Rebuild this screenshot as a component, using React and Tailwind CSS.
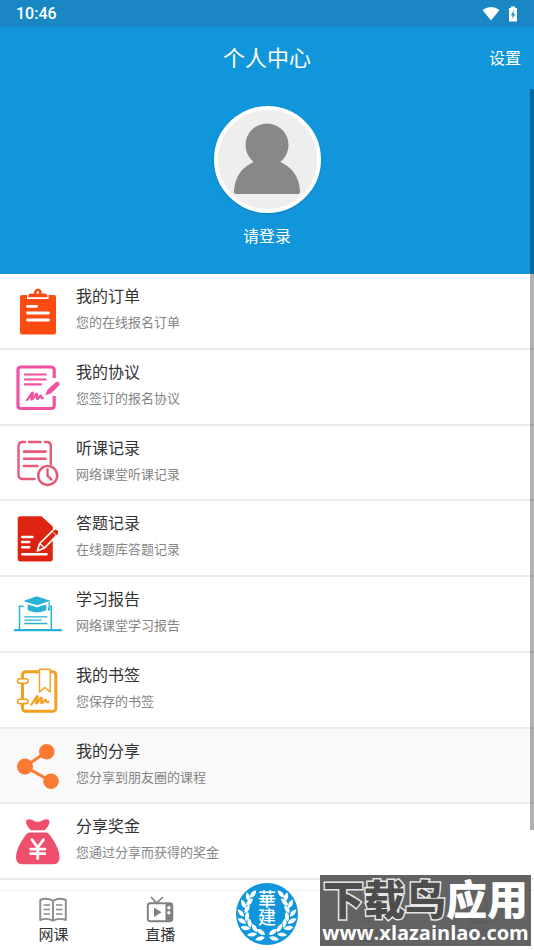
import React from 'react'

const OrderIcon = () => (
  <svg viewBox="0 0 48 48" className="w-12 h-12" fill="none">
    <rect x="6" y="7" width="36" height="39.5" rx="2" fill="#fd4a10" />
    <path d="M13 11V7.500Q13 4.500 16.500 4.500H19.500A4.300 4.300 0 0 1 28 4.500H31Q34.600 4.500 34.600 7.500V11Z" fill="#fff" />
    <path d="M14.300 9.300V8Q14.300 5.500 17 5.500H30.500Q33.300 5.500 33.300 8V9.300Z" fill="#fd4a10" />
    <circle cx="23.800" cy="4.600" r="2.600" fill="#fff" stroke="#fd4a10" strokeWidth="2.400" />
    <path d="M13.500 18.400H22.500M13.500 25H34.500M13.500 32H34.500" stroke="#fff" strokeWidth="2.800" strokeLinecap="round" />
  </svg>
)

const AgreementIcon = () => (
  <svg viewBox="0 0 48 48" className="w-12 h-12" fill="none" stroke="#f0529f" strokeLinecap="round" strokeLinejoin="round">
    <path d="M40.200 14V6Q40.200 3 37.200 3H7Q4 3 4 6V41.500Q4 44.500 7 44.500H37.200Q40.200 44.500 40.200 41.500V32" strokeWidth="3.200" strokeLinecap="butt" />
    <path d="M10 10.500H32.500M10 15.500H32.500M10 20.300H27.700" strokeWidth="2.200" strokeLinecap="butt" />
    <path d="M13 36C15.500 33.500 17 29.500 18.500 28.500C20 28.500 16 36 18 35.500C20 34.500 21 30 22.800 29.700C24 30 21.500 35 23.500 35C25 35 25.300 31.500 26.700 31.500C27.500 32 26.500 34.500 29 34" strokeWidth="2.200" />
    <path d="M32 30.500L34 26L42.500 18.500Q44.500 18 45 20.500L36.500 29Z" fill="#f0529f" strokeWidth="1.200" />
  </svg>
)

const LessonRecordIcon = () => (
  <svg viewBox="0 0 48 48" className="w-12 h-12" fill="none" stroke="#e55a75" strokeLinecap="round" strokeLinejoin="round">
    <path d="M11 2H8.500Q4.500 2 4.500 6V34.500Q4.500 39 8.500 39H20.500M15 2H26.500M31 2H33Q36.800 2 36.800 6V24" strokeWidth="2.400" />
    <path d="M10 11.600H31.500M10 18.700H31.500M10 26H23.500" strokeWidth="2.600" />
    <circle cx="33.700" cy="35.500" r="9.500" fill="#fff" strokeWidth="2.500" />
    <path d="M33.500 29.500V35.800L37.500 39.500" strokeWidth="2.500" />
  </svg>
)

const AnswerRecordIcon = () => (
  <svg viewBox="0 0 48 48" className="w-12 h-12" fill="none">
    <path d="M6.500 1.200H27.500L38.800 11.500V43.500Q38.800 46.500 36 46.500H6.500Q3.700 46.500 3.700 43.500V4Q3.700 1.200 6.500 1.200Z" fill="#dc2410" />
    <path d="M8.200 22H18.500M8.200 27.100H15.200M8.200 32.300H15.200M8.200 39.200H32.500" stroke="#fff" strokeWidth="2.500" strokeLinecap="round" />
    <path d="M23.300 36L25.700 28.500L38.500 15.800L43 20.200L30.500 33Z" fill="#dc2410" stroke="#fff" strokeWidth="1.700" strokeLinejoin="round" />
    <path d="M25.700 28.500L30.500 33" stroke="#fff" strokeWidth="1.400" />
    <path d="M38.700 16.500Q41 13.700 43.500 15.500Q45.300 17.500 42.700 20.200" fill="#dc2410" />
  </svg>
)

const ReportIcon = () => (
  <svg viewBox="0 0 48 48" className="w-12 h-12" fill="none" stroke="#26b3d6">
    <path d="M0.800 39.200H47.200" strokeWidth="2.200" strokeLinecap="round" />
    <path d="M9.500 15.200H5.500V38.500M35.500 15.200H37.300V38.500" strokeWidth="1.500" />
    <path d="M10.300 25.800H33.300M10.300 29.200H27.700M10.300 32.500H33.300" strokeWidth="1.300" />
    <path d="M9.300 10L22.700 5.300L36.300 9.800L23 14.300Z" fill="#26b3d6" stroke="none" />
    <path d="M13.700 13.500L23 16.200L32.300 13.500V19.300Q23 23.500 13.700 19.300Z" fill="#26b3d6" stroke="none" />
    <path d="M35 10V16.500" strokeWidth="1.100" />
    <path d="M34.200 16.300H35.800L36.200 19.500H33.800Z" fill="#26b3d6" stroke="none" />
  </svg>
)

const BookmarkIcon = () => (
  <svg viewBox="0 0 48 48" className="w-12 h-12" fill="none" stroke="#f59f1f" strokeLinejoin="round" strokeLinecap="round">
    <rect x="8.500" y="4.800" width="33.300" height="39.500" rx="3" strokeWidth="3" />
    <rect x="3.600" y="11.800" width="10.500" height="4.400" rx="2.200" fill="#fff" strokeWidth="1.600" />
    <rect x="3.600" y="32.200" width="10.500" height="4.400" rx="2.200" fill="#fff" strokeWidth="1.600" />
    <path d="M25.500 2.200H36.200V25L30.800 20.500L25.500 25Z" fill="#fff" strokeWidth="1.400" />
    <path d="M17.300 37.500C20 35 21.300 30 23.300 29C25 29.300 20.500 37 22.500 36.500C24.700 35.500 25.500 30.800 27.300 30.500C29 30.800 26 36.300 28 36.200C29.800 35.800 30 32.800 31.500 32.800C32.500 33.200 31.500 36 34.500 35" strokeWidth="2.200" />
  </svg>
)

const ShareIcon = () => (
  <svg viewBox="0 0 48 48" className="w-12 h-12" fill="#fb7a33">
    <path d="M32.700 8.700L11 23.600L37 38.200" stroke="#fb7a33" strokeWidth="3" fill="none" />
    <circle cx="32.700" cy="8.700" r="7.700" />
    <circle cx="11" cy="23.600" r="8" />
    <circle cx="37" cy="38.200" r="7.800" />
  </svg>
)

const BonusIcon = () => (
  <svg viewBox="0 0 48 48" className="w-12 h-12" fill="#ee4f6c">
    <path d="M17 12.300Q12 7.500 12 4Q12 1 15.500 1.200Q18 1.300 20 3Q23.700 4.700 27.500 3Q29.500 1.300 32 1.200Q35.500 1 35.500 4Q35.500 7.500 30.500 12.300Z" />
    <path d="M15.500 14.500H32Q34.500 14.500 36.500 18Q45.500 30 45.500 39.500Q45.500 46.300 39 46.300H8.500Q2 46.300 2 39.500Q2 30 11 18Q13 14.500 15.500 14.500Z" />
    <path d="M18 21.700L23.700 29.500L29.500 21.700M23.700 29.500V40.700M16.700 31.200H30.800M16.700 35.700H30.800" fill="none" stroke="#fff" strokeWidth="2.800" strokeLinecap="round" />
  </svg>
)

const CourseIcon = () => (
  <svg viewBox="0 0 28 28" className="w-7 h-7" fill="none" stroke="#8c8c8c">
    <path d="M14 4.800Q8 1.300 1.200 4V24Q8 21.500 14 24.700Q20 21.500 26.800 24V4Q20 1.300 14 4.800V24.500" strokeWidth="1.900" strokeLinejoin="round" />
    <path d="M4.500 9H11M4.500 13.500H11M4.500 18H11M17 9H23.500M17 13.500H23.500M17 18H23.500" strokeWidth="1.500" />
  </svg>
)

const LiveIcon = () => (
  <svg viewBox="0 0 28 28" className="w-7 h-7" fill="none" stroke="#808080">
    <path d="M5 1L10.500 7L17 1" strokeWidth="1.700" />
    <rect x="1.800" y="7.300" width="24.500" height="18" rx="2.500" strokeWidth="1.900" />
    <path d="M19.500 7.300H26V25.300H19.500Z" fill="#808080" stroke="none" />
    <path d="M8 11.500V21L15.500 16.200Z" fill="#808080" stroke="none" />
    <circle cx="22.900" cy="11.800" r="1.700" fill="#fff" stroke="none" />
    <circle cx="22.900" cy="16.800" r="1.700" fill="#fff" stroke="none" />
  </svg>
)

const QuizIcon = () => (
  <svg viewBox="0 0 28 28" className="w-7 h-7" fill="none" stroke="#808080" strokeWidth="1.700">
    <rect x="4" y="3" width="20" height="22" rx="2" />
    <path d="M8 9H20M8 14H20M8 19H15" />
  </svg>
)

const MineIcon = () => (
  <svg viewBox="0 0 28 28" className="w-7 h-7" fill="none" stroke="#1296db" strokeWidth="1.700">
    <circle cx="14" cy="9" r="6" />
    <path d="M3 26Q3 16 14 16Q25 16 25 26Z" />
  </svg>
)

// position and direction of each leaf along the left branch
const leaves = [
  [17, 11, -40], [12, 14, 15], [13.500, 19, -45], [7.500, 21, 25], [11, 26, -30], [5, 30, 40],
  [11, 33.500, -10], [6, 38, 60], [13.500, 40, 10], [9.500, 45, 80], [18.500, 45, 30], [16, 51.500, 95],
  [25, 49, 55], [24, 55.500, 105],
]

const Branch = () => (
  <g>
    {leaves.map(([x, y, angle], index) => (
      <path
        key={index}
        d="M0 -5Q4.200 0 0 5Q-4.200 0 0 -5Z"
        transform={`translate(${x} ${y}) rotate(${-angle})`}
      />
    ))}
  </g>
)

const records = [
  { title: '我的订单', description: '您的在线报名订单', icon: OrderIcon },
  { title: '我的协议', description: '您签订的报名协议', icon: AgreementIcon },
  { title: '听课记录', description: '网络课堂听课记录', icon: LessonRecordIcon },
  { title: '答题记录', description: '在线题库答题记录', icon: AnswerRecordIcon },
  { title: '学习报告', description: '网络课堂学习报告', icon: ReportIcon },
  { title: '我的书签', description: '您保存的书签', icon: BookmarkIcon },
  { title: '我的分享', description: '您分享到朋友圈的课程', icon: ShareIcon, active: true },
  { title: '分享奖金', description: '您通过分享而获得的奖金', icon: BonusIcon },
]

const NavItem = ({ icon: Icon, label, current }) => (
  <a href="#" className={`flex flex-col items-center pt-[5px] ${current ? 'text-[#1296db]' : 'text-[#333]'}`}>
    <Icon />
    <span className="text-[15px] leading-[22px]">{label}</span>
  </a>
)

const App = () => {
  return (
    <div className="relative min-h-screen flex flex-col bg-white font-['Roboto','Noto_Sans_CJK_SC',sans-serif]">
      {/* Status bar */}
      <div className="h-[27px] px-4 flex items-center justify-between bg-[#1987c3] text-white">
        <span className="text-base leading-6 font-medium">10:46</span>
        <div className="flex items-center gap-2">
          <svg viewBox="0 0 18 15" className="w-[18px] h-[15px]" fill="#fff">
            <path d="M0.500 4Q9 -2 17.500 4L9 14.500Z" />
          </svg>
          <svg viewBox="0 0 10 16" className="w-[10px] h-4" fill="#fff">
            <path d="M3 0.500H7V2H9V15.500H1V2H3Z" />
            <path d="M6 4.500L2.800 9.200H4.700L4.200 13L7.300 8.200H5.500Z" fill="#1987c3" />
          </svg>
        </div>
      </div>

      {/* Header */}
      <header className="h-[62px] pt-[2px] px-[13px] grid grid-cols-3 items-center bg-[#1296db] text-white">
        <h1 className="col-start-2 text-center text-[22px] leading-8">个人中心</h1>
        <button type="button" className="justify-self-end text-base leading-6">设置</button>
      </header>

      {/* Profile */}
      <section className="flex flex-col items-center pt-[17px] pb-[25px] bg-[#1296db] text-white">
        <div className="w-[107px] h-[107px] rounded-full border-4 border-white bg-[#eee] overflow-hidden shadow">
          <svg viewBox="1 1 99 99" className="w-full h-full" fill="#888">
            <circle cx="50" cy="36" r="21.500" />
            <path d="M17 83Q17.500 61 38.500 52H61.500Q82.500 61 83 83Q83 85 81 85H19Q17 85 17 83Z" />
          </svg>
        </div>
        <button type="button" className="mt-3 text-base leading-6">请登录</button>
      </section>

      {/* Records */}
      <ul className="flex-1 grid auto-rows-fr pb-[10px]">
        {records.map(({ title, description, icon: Icon, active }) => (
          <li key={title} className={`border-b-2 border-[#ebebeb] ${active ? 'bg-[#f9f9f9]' : 'bg-white'}`}>
            <a href="#" className="flex gap-[14px] px-[14px]">
              <div className="pt-[14px] shrink-0">
                <Icon />
              </div>
              <div className="pt-[10px]">
                <h2 className="text-base leading-[26px] text-[#333]">{title}</h2>
                <p className="text-[13px] leading-[26px] text-[#858585]">{description}</p>
              </div>
            </a>
          </li>
        ))}
      </ul>

      {/* Bottom navigation */}
      <nav className="h-[60px] grid grid-cols-5 border-t border-[#eee]">
        <NavItem icon={CourseIcon} label="网课" />
        <NavItem icon={LiveIcon} label="直播" />
        <a href="#" className="relative justify-self-center -mt-2 w-[62px] h-[62px] rounded-full bg-[#1296db]">
          <svg viewBox="0 0 62 62" className="w-full h-full" fill="#fff">
            <Branch />
            <g transform="matrix(-1 0 0 1 62 0)">
              <Branch />
            </g>
          </svg>
          <div className="absolute inset-0 pt-2 text-center text-[18px] leading-[18px] font-medium text-white">
            <div>華</div>
            <div>建</div>
          </div>
        </a>
        <NavItem icon={QuizIcon} label="题库" />
        <NavItem icon={MineIcon} label="我的" current />
      </nav>

      {/* Scroll thumb */}
      <div className="absolute right-0 top-[89px] bottom-[120px] w-1 bg-black/30"></div>

      {/* Site stamp */}
      <div className="absolute right-[3px] bottom-1 w-[211px] h-[71px] flex flex-col items-center bg-[#5b5b5b] opacity-95 text-white whitespace-nowrap">
        <div className="pt-1 text-[41px] leading-[44px] font-black">
          <span className="text-[#444] [-webkit-text-stroke:3px_#e5e5e5] [paint-order:stroke_fill]">下载鸟</span>
          <span>应用</span>
        </div>
        <div className="text-[20px] leading-5 font-bold font-['Open_Sans',sans-serif]">www.xlazainlao.com</div>
      </div>
    </div>
  )
}

export default App
